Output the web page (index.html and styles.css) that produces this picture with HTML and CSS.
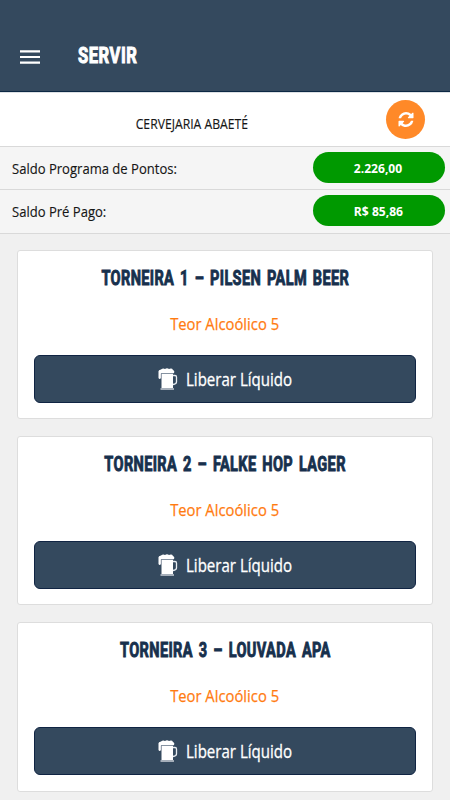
FILE: index.html
```html
<!DOCTYPE html>
<html lang="pt-BR">
<head>
<meta charset="utf-8">
<title>Servir</title>
<link rel="stylesheet" href="styles.css">
</head>
<body>
<svg class="symbols" aria-hidden="true">
  <symbol id="beer" viewBox="0 0 20 22">
    <path d="M.5 10V4Q0 2 3 1.5Q5 0 7 1Q9-.5 11 1Q14-.2 15 2Q17 3 16 5H3V10Q1.5 12 .5 10Z" fill="#fff"/>
    <path d="M3.5 6H15V20H3.5Z" fill="#fff"/>
    <path d="M3.2 10V5.5H15.5" fill="none" stroke="#9ba4b2" stroke-width=".8"/>
    <path d="M15 7.5H17Q18.5 7.5 18.5 9V14Q18.5 16 15 16.5" fill="none" stroke="#e9edf2" stroke-width="1.3"/>
    <path d="M2.5 21H16" stroke="#cbd1d9" stroke-width="1.5"/>
  </symbol>
</svg>
<header class="topbar">
  <svg class="menu" viewBox="0 0 20 14"><path d="M0 1.4H20M0 7H20M0 12.6H20"/></svg>
  <h1 class="heading"><span>SERVIR</span></h1>
</header>
<section class="brewery">
  <span class="brewery-name">CERVEJARIA ABAETÉ</span>
  <button class="refresh" aria-label="Atualizar">
    <svg viewBox="0 0 1536 1536"><path d="M1511 928q0 5-1 7-64 268-268 434.500T764 1536q-146 0-282.500-55T238 1324l-129 129q-19 19-45 19t-45-19-19-45V960q0-26 19-45t45-19h448q26 0 45 19t19 45-19 45l-137 137q71 66 161 102t187 36q134 0 250-65t186-179q11-17 53-117 8-23 30-23h192q13 0 22.500 9.500t9.500 22.500zM1536 128v448q0 26-19 45t-45 19h-448q-26 0-45-19t-19-45 19-45l138-138Q969 256 768 256q-134 0-250 65T332 500q-11 17-53 117-8 23-30 23H50q-13 0-22.500-9.500T18 608v-7q65-268 270-434.500T768 0q146 0 284 55.500T1297 212l130-129q19-19 45-19t45 19 19 45z"/></svg>
  </button>
</section>
<section class="balance"><span class="balance-label">Saldo Programa de Pontos:</span><span class="pill"><span>2.226,00</span></span></section>
<section class="balance"><span class="balance-label">Saldo Pré Pago:</span><span class="pill"><span>R$ 85,86</span></span></section>
<main class="taps">
  <article class="card">
    <h2 class="tap-name"><span>TORNEIRA 1 – PILSEN PALM BEER</span></h2>
    <p class="strength"><span>Teor Alcoólico 5</span></p>
    <button class="pour"><svg><use href="#beer"/></svg><span>Liberar Líquido</span></button>
  </article>
  <article class="card">
    <h2 class="tap-name"><span>TORNEIRA 2 – FALKE HOP LAGER</span></h2>
    <p class="strength"><span>Teor Alcoólico 5</span></p>
    <button class="pour"><svg><use href="#beer"/></svg><span>Liberar Líquido</span></button>
  </article>
  <article class="card">
    <h2 class="tap-name"><span>TORNEIRA 3 – LOUVADA APA</span></h2>
    <p class="strength"><span>Teor Alcoólico 5</span></p>
    <button class="pour"><svg><use href="#beer"/></svg><span>Liberar Líquido</span></button>
  </article>
</main>
</body>
</html>
```
FILE: styles.css
```css
* { box-sizing: border-box; }
body { margin: 0; height: 800px; overflow: hidden; background: #f0f0f0; font-family: "Open Sans", sans-serif; color: #161616; }
h1, h2, p { margin: 0; }
button { padding: 0; border: 0; font-family: inherit; }
.symbols { display: none; }
.topbar { display: flex; align-items: center; height: 92px; padding: 20px 20px 0; background: #34495e; border-bottom: 1px solid #0c2844; }
.menu { width: 20px; height: 14px; margin: 2px 38px 0 0; fill: none; stroke: #fff; stroke-width: 2.2; }
.heading { font: 700 21.5px/30px Roboto, sans-serif; color: #fff; }
.heading span { display: inline-block; transform: scaleX(.77); transform-origin: left; letter-spacing: .7px; -webkit-text-stroke: 1px #fff; }
.brewery { display: grid; grid-template-columns: 97px 190px 1fr; align-items: center; height: 54px; padding: 0 25px 0 0; background: #fff; border-top: 1px solid #dde1e5; }
.brewery-name { grid-column: 2; justify-self: center; margin-top: 8px; white-space: nowrap; font-size: 14.5px; line-height: 20px; transform: scaleX(.84); -webkit-text-stroke: .15px #161616; }
.refresh { display: grid; place-items: center; justify-self: end; width: 39px; height: 39px; border-radius: 50%; background: #ff8928; }
.refresh svg { width: 16px; height: 15px; fill: #fff; }
.balance { display: flex; align-items: center; justify-content: space-between; height: 43.3px; padding: 0 5.5px 0 12px; background: #f5f5f5; border-top: 1px solid #d9d9d9; }
.balance-label { white-space: nowrap; font-size: 15px; line-height: 22px; transform: scaleX(.87); transform-origin: left; -webkit-text-stroke: .15px #161616; }
.pill { display: grid; place-items: center; width: 132px; height: 31px; margin-top: -1px; border-radius: 16px; background: #009900; color: #fff; font: 700 13px/18px "Open Sans", sans-serif; }
.pill span { transform: scaleX(.93); margin-top: 1px; }
.taps { display: grid; gap: 17px; padding: 16.5px 17px 0; border-top: 1px solid #d9d9d9; }
.card { display: flex; flex-direction: column; height: 169.2px; padding: 15px 16px; background: #fff; border: 1px solid #dddddd; border-radius: 3px; }
.tap-name { height: 24px; padding-top: 1px; text-align: center; white-space: nowrap; color: #17304d; font: 700 19.5px/24px Roboto, sans-serif; }
.tap-name span { display: inline-block; transform: scaleX(.745); word-spacing: 2.5px; letter-spacing: .5px; -webkit-text-stroke: .9px #17304d; margin: 0 -40px; }
.strength { margin-top: 22px; height: 24px; text-align: center; color: #ff7b10; font-size: 17px; line-height: 24px; }
.strength span { display: inline-block; transform: scaleX(.87); -webkit-text-stroke: .25px #ff7b10; }
.pour { display: flex; align-items: center; height: 48px; margin-top: 18.5px; padding-left: 123px; flex: none; border: 1px solid #102443; border-radius: 6px; background: #34495e; color: #fff; font-size: 17.5px; line-height: 24px; }
.pour svg { width: 20px; height: 22px; margin-right: 8px; }
.pour span { margin-top: 1px; transform: scaleX(.86); transform-origin: left; white-space: nowrap; -webkit-text-stroke: .3px #fff; }
```
